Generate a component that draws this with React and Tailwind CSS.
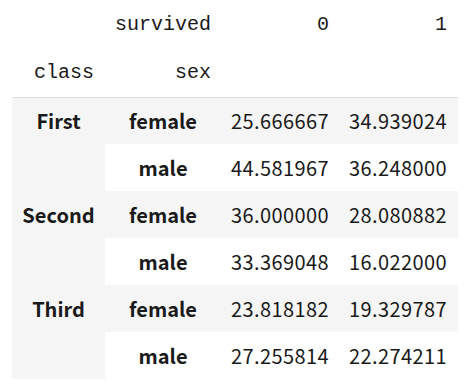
const rows = [
  { cls: "First", sex: "female", a: "25.666667", b: "34.939024" },
  { sex: "male", a: "44.581967", b: "36.248000" },
  { cls: "Second", sex: "female", a: "36.000000", b: "28.080882" },
  { sex: "male", a: "33.369048", b: "16.022000" },
  { cls: "Third", sex: "female", a: "23.818182", b: "19.329787" },
  { sex: "male", a: "27.255814", b: "22.274211" },
];

export default function App() {
  return (
    <div className="h-[387px] w-[465px] bg-white pl-3 text-[#1a1a1a]">
      <table className="table-fixed border-collapse">
        <colgroup>
          <col className="w-[93px]" />
          <col className="w-[116px]" />
          <col className="w-[118px]" />
          <col className="w-[119px]" />
        </colgroup>
        <thead className="font-['Liberation_Mono',monospace] text-[20px] font-normal">
          <tr className="h-[50px]">
            <th className="pr-[11px] text-right font-normal"></th>
            <th className="pr-[10px] text-right font-normal">survived</th>
            <th className="pr-[10px] text-right font-normal">0</th>
            <th className="pr-[11px] text-right font-normal">1</th>
          </tr>
          <tr className="h-[47px] border-b border-[#dedede]">
            <th className="pr-[11px] text-right font-normal">class</th>
            <th className="pr-[10px] text-right font-normal">sex</th>
            <th></th>
            <th></th>
          </tr>
        </thead>
        <tbody className="font-['Noto_Sans_CJK_KR','Noto_Sans',sans-serif] text-[20px]">
          {rows.map((r, i) => (
            <tr key={i} className={`h-[47px] ${i % 2 === 0 ? "bg-[#f5f5f5]" : "bg-white"}`}>
              {r.cls && (
                <th rowSpan={2} className="bg-[#f5f5f5] p-0 align-top font-bold">
                  <div className="flex h-[47px] items-center justify-center">{r.cls}</div>
                </th>
              )}
              <th className="text-center font-bold">{r.sex}</th>
              <td className="pr-[10px] text-right tracking-[0.4px]">{r.a}</td>
              <td className="pr-[11px] text-right tracking-[0.4px]">{r.b}</td>
            </tr>
          ))}
        </tbody>
      </table>
    </div>
  );
}
